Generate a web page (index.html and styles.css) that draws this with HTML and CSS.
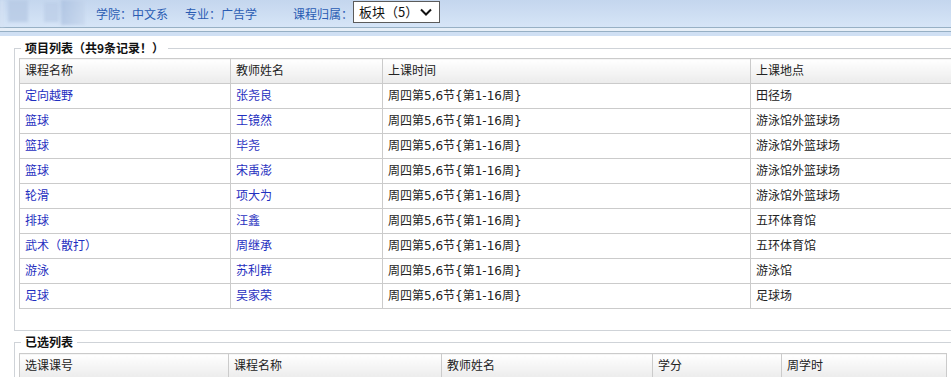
FILE: index.html
```html
<!DOCTYPE html>
<html lang="zh-CN">
<head>
<meta charset="utf-8">
<title>选课</title>
<link rel="stylesheet" href="styles.css">
</head>
<body>
<div class="topbar">
  <div class="logo">
    <span class="blk b1"></span><span class="blk b2"></span><span class="blk b3"></span><span class="blk b4"></span>
  </div>
  <div class="info">
    <span class="item">学院：中文系</span>
    <span class="item">专业：广告学</span>
    <span class="item last">课程归属：</span>
    <span class="select"><span class="seltext">板块（5）</span><svg class="chev" width="12" height="8" viewBox="0 0 12 8"><path d="M1 1.5 L6 6.5 L11 1.5" fill="none" stroke="#111" stroke-width="2"/></svg></span>
  </div>
</div>
<div class="rule"></div>
<div class="main">
  <fieldset class="box box1">
    <legend>项目列表（共9条记录！）</legend>
    <table class="grid grid1">
      <colgroup><col class="c1"><col class="c2"><col class="c3"><col class="c4"></colgroup>
      <thead>
        <tr><th>课程名称</th><th>教师姓名</th><th>上课时间</th><th>上课地点</th></tr>
      </thead>
      <tbody>
        <tr><td><a href="#">定向越野</a></td><td><a href="#">张尧良</a></td><td>周四第5,6节{第1-16周}</td><td>田径场</td></tr>
        <tr><td><a href="#">篮球</a></td><td><a href="#">王镜然</a></td><td>周四第5,6节{第1-16周}</td><td>游泳馆外篮球场</td></tr>
        <tr><td><a href="#">篮球</a></td><td><a href="#">毕尧</a></td><td>周四第5,6节{第1-16周}</td><td>游泳馆外篮球场</td></tr>
        <tr><td><a href="#">篮球</a></td><td><a href="#">宋禹澎</a></td><td>周四第5,6节{第1-16周}</td><td>游泳馆外篮球场</td></tr>
        <tr><td><a href="#">轮滑</a></td><td><a href="#">项大为</a></td><td>周四第5,6节{第1-16周}</td><td>游泳馆外篮球场</td></tr>
        <tr><td><a href="#">排球</a></td><td><a href="#">汪鑫</a></td><td>周四第5,6节{第1-16周}</td><td>五环体育馆</td></tr>
        <tr><td><a href="#">武术（散打）</a></td><td><a href="#">周继承</a></td><td>周四第5,6节{第1-16周}</td><td>五环体育馆</td></tr>
        <tr><td><a href="#">游泳</a></td><td><a href="#">苏利群</a></td><td>周四第5,6节{第1-16周}</td><td>游泳馆</td></tr>
        <tr><td><a href="#">足球</a></td><td><a href="#">吴家荣</a></td><td>周四第5,6节{第1-16周}</td><td>足球场</td></tr>
      </tbody>
    </table>
  </fieldset>
  <fieldset class="box box2">
    <legend>已选列表</legend>
    <table class="grid grid2">
      <colgroup><col class="d1"><col class="d2"><col class="d3"><col class="d4"><col class="d5"></colgroup>
      <thead>
        <tr><th>选课课号</th><th>课程名称</th><th>教师姓名</th><th>学分</th><th>周学时</th></tr>
      </thead>
    </table>
  </fieldset>
</div>
</body>
</html>
```
FILE: styles.css
```css
html, body {
  margin: 0;
  padding: 0;
  overflow: hidden;
  background: #fff;
}
body {
  font-family: "DejaVu Sans", "Noto Sans CJK SC", sans-serif;
  font-size: 12px;
  color: #222;
  width: 951px;
}
.topbar {
  height: 27px;
  display: flex;
  align-items: center;
  background: linear-gradient(#c4d6ee, #d6e5f7);
}
.logo {
  width: 96px;
  height: 27px;
  display: flex;
  align-items: stretch;
  flex: none;
  filter: blur(1.5px);
  opacity: 0.75;
}
.blk { display: block; }
.b1 { width: 4px; background: #d5e2f3; }
.b2 { width: 20px; margin-left: 4px; background: #b6c9e4; height: 22px; }
.b3 { width: 15px; margin-left: 16px; background: #bccee8; height: 20px; margin-top: 2px; }
.b4 { width: 24px; margin-left: 2px; background: linear-gradient(100deg, #a9bfdf, #c8d8ee); height: 25px; }
.info {
  display: flex;
  align-items: center;
  color: #2a5cb3;
}
.item { margin-right: 17px; }
.item.last { margin-left: 19px; margin-right: 0; }
.select {
  display: flex;
  align-items: center;
  justify-content: space-between;
  box-sizing: border-box;
  width: 87px;
  height: 22px;
  margin-top: -4px;
  padding: 0 7px 0 5px;
  background: #fff;
  border: 1px solid #5b5b5b;
  color: #111;
  font-size: 13px;
}
.seltext {
  font-family: "Noto Sans CJK SC", sans-serif;
}
.rule {
  height: 9px;
  box-sizing: border-box;
  border-top: 1px solid #97b0c5;
  background: linear-gradient(#e7eff8 0, #e7eff8 3px, #97b0c5 3px, #97b0c5 4px, #d0e0f4 4px);
}
.main {
  padding-left: 14px;
}
.box {
  margin: 4px 0 0 0;
  padding: 2px 0 21px 4px;
  border: 1px solid #cfd3d8;
  width: 1040px;
  min-width: 0;
}
.box legend {
  margin-left: 2px;
  padding: 0 4px;
  font-weight: bold;
  color: #111;
  line-height: 16px;
  font-family: "Noto Sans CJK SC", sans-serif;
}
.box2 {
  margin-top: 3px;
  padding-top: 3px;
}
.grid {
  border-collapse: collapse;
  table-layout: fixed;
}
.grid1 { width: 1030px; }
.grid2 { width: 928px; }
.c1 { width: 211px; }
.c2 { width: 152px; }
.c3 { width: 368px; }
.d1 { width: 209px; }
.d2 { width: 213px; }
.d3 { width: 211px; }
.d4 { width: 129px; }
.grid th, .grid td {
  border: 1px solid #cbcbcb;
  height: 24px;
  padding: 0 5px;
  text-align: left;
  font-weight: normal;
  white-space: nowrap;
  line-height: 16px;
}
.grid th {
  background: linear-gradient(#ffffff, #ebebeb);
  color: #222;
}
.grid td a {
  color: #1f2fc0;
  text-decoration: none;
}
```
